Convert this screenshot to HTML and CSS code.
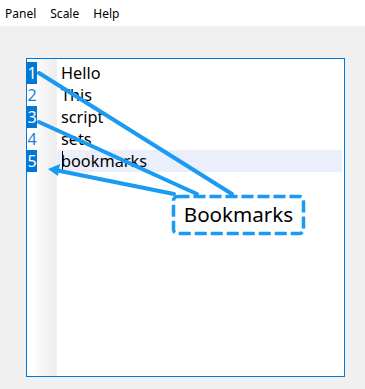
FILE: index.html
```html
<!DOCTYPE html>
<html lang="en">
<head>
    <meta charset="UTF-8">
    <title>Bookmarks</title>
    <link rel="stylesheet" href="styles.css">
</head>
<body>
    <div class="menubar">
        <span class="menu">Panel</span>
        <span class="menu">Scale</span>
        <span class="menu">Help</span>
    </div>
    <div class="editor">
        <div class="gutter">
            <div class="num mark">1</div>
            <div class="num">2</div>
            <div class="num mark">3</div>
            <div class="num">4</div>
            <div class="num mark">5</div>
        </div>
        <div class="text">
            <div class="line">Hello</div>
            <div class="line">This</div>
            <div class="line">script</div>
            <div class="line">sets</div>
            <div class="line current"><span class="caret"></span>bookmarks</div>
        </div>
    </div>
    <!--callout over the editor-->
    <svg class="callout" width="365" height="389" viewBox="0 0 365 389">
        <g stroke="#1b9af2" stroke-width="4" stroke-linecap="round" fill="none">
            <line x1="39" y1="73" x2="232" y2="194"/>
            <line x1="39" y1="122" x2="197" y2="194"/>
            <line x1="174" y1="194" x2="55" y2="170"/>
        </g>
        <polygon points="48,169 60,164 58,176" fill="#1b9af2"/>
        <rect x="173.5" y="196.5" width="130" height="37" rx="4" fill="#fff" stroke="#1b9af2" stroke-width="3.5" stroke-dasharray="12 4"/>
        <text x="238.5" y="222" text-anchor="middle" class="label">Bookmarks</text>
    </svg>
</body>
</html>
```
FILE: styles.css
```css
body{
 margin: 0;
 background-color: #f0f0f0;
 font-family: "Noto Sans", "Open Sans", sans-serif;
 position: relative;
 height: 389px;
 overflow: hidden;
}
.menubar{
 height: 26px;
 background-color: #fff;
 display: flex;
 align-items: center;
 padding-left: 5px;
 font-size: 12px;
 color: #000;
}
.menu{
 margin-right: 14px;
}
.editor{
 margin: 32px 0 0 26px;
 width: 317px;
 height: 317px;
 border: 1px solid #0078d7;
 background-color: #fff;
 display: flex;
}
.gutter{
 width: 28px;
 padding-top: 3px;
 border-right: 2px solid #efefef;
 background: linear-gradient(to right, #fff 20%, #ededed);
}
.num{
 height: 22px;
 line-height: 22px;
 width: 10px;
 text-align: center;
 font-size: 16px;
 color: #1a7fd8;
}
.num.mark{
 background-color: #0078d7;
 color: #fff;
}
.text{
 flex: 1;
 padding-top: 3px;
 padding-right: 2px;
}
.line{
 height: 22px;
 line-height: 22px;
 padding-left: 4px;
 font-size: 16.3px;
 color: #000;
 position: relative;
}
.line.current{
 background-color: #ebeefb;
}
.caret{
 position: absolute;
 left: 5px;
 top: 1px;
 width: 1px;
 height: 19px;
 background-color: #000;
}
.callout{
 position: absolute;
 left: 0;
 top: 0;
}
.label{
 font-family: "Noto Sans", "Open Sans", sans-serif;
 font-size: 20.6px;
 fill: #000;
}
```
